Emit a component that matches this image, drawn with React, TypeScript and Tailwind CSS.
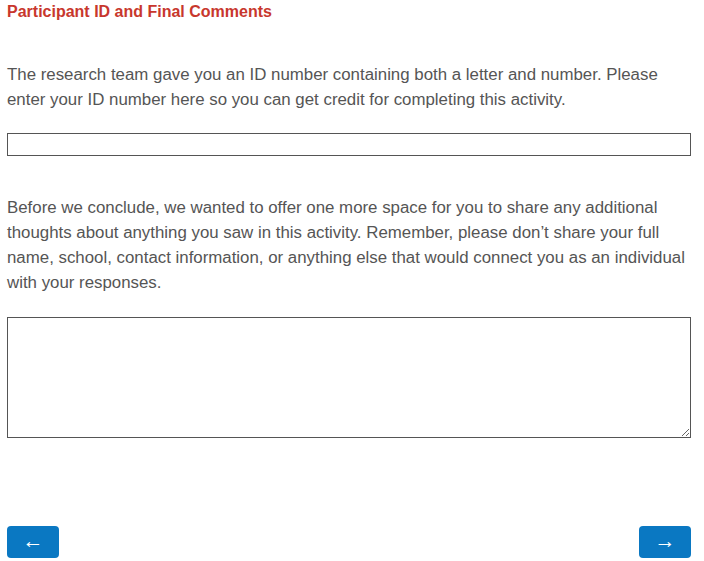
export default function App() {
  return (
    <div className="pl-[7px] pr-[13px] pb-[4px] font-['Liberation_Sans',Arial,sans-serif]">
      <h1 className="pt-[1px] text-[16px] font-bold leading-[21px] text-[#c8372d]">
        Participant ID and Final Comments
      </h1>

      <p className="mt-[40px] text-[16.85px] leading-[25px] text-[#555]">
        The research team gave you an ID number containing both a letter and number. Please
        enter your ID number here so you can get credit for completing this activity.
      </p>
      <input
        type="text"
        aria-label="ID number"
        className="mt-[21px] block h-[23px] w-full border border-[#555] bg-white px-1 outline-none"
      />

      <p className="mt-[39px] text-[16.85px] leading-[25px] text-[#555]">
        Before we conclude, we wanted to offer one more space for you to share any additional
        thoughts about anything you saw in this activity. Remember, please don’t share your full
        name, school, contact information, or anything else that would connect you as an individual
        with your responses.
      </p>
      <textarea
        aria-label="Additional comments"
        className="mt-[22px] block h-[121px] w-full resize border border-[#555] bg-white p-1 outline-none"
      />

      <div className="mt-[88px] flex justify-between">
        <button type="button" className="flex h-[32px] w-[52px] items-center justify-center rounded-[4px] bg-[#0a78c2] pb-[3px] text-[21px] leading-none text-white">
          ←
        </button>
        <button type="button" className="flex h-[32px] w-[52px] items-center justify-center rounded-[4px] bg-[#0a78c2] pb-[3px] text-[21px] leading-none text-white">
          →
        </button>
      </div>
    </div>
  );
}
